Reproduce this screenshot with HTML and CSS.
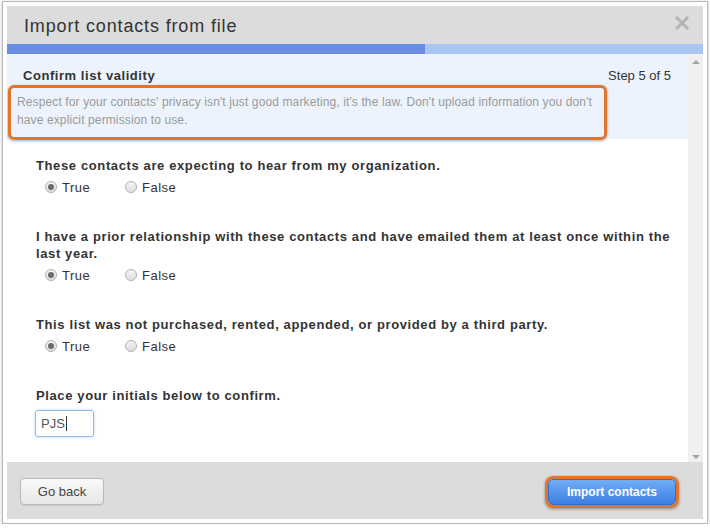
FILE: index.html
```html
<!DOCTYPE html>
<html>
<head>
<meta charset="utf-8">
<link rel="stylesheet" href="styles.css">
</head>
<body>
<div class="frame">
  <div class="dialog">
    <div class="header">
      <h1 class="title">Import contacts from file</h1>
      <svg class="close" width="14" height="14" viewBox="0 0 14 14"><path d="M2 2 L12 12 M12 2 L2 12" stroke="#b3b3b3" stroke-width="3" stroke-linecap="square"/></svg>
    </div>
    <div class="progress"><div class="progress-fill" style="width:418px"></div></div>
    <div class="body">
      <div class="main">
        <div class="intro">
          <div class="intro-head">
            <span class="intro-title">Confirm list validity</span>
            <span class="step">Step 5 of 5</span>
          </div>
          <p class="notice">Respect for your contacts' privacy isn't just good marketing, it's the law. Don't upload information you don't have explicit permission to use.</p>
        </div>
        <div class="questions">
          <div class="question">
            <div class="q-label">These contacts are expecting to hear from my organization.</div>
            <div class="options">
              <span class="option"><span class="radio checked"></span>True</span>
              <span class="option"><span class="radio"></span>False</span>
            </div>
          </div>
          <div class="question">
            <div class="q-label">I have a prior relationship with these contacts and have emailed them at least once within the last year.</div>
            <div class="options">
              <span class="option"><span class="radio checked"></span>True</span>
              <span class="option"><span class="radio"></span>False</span>
            </div>
          </div>
          <div class="question">
            <div class="q-label">This list was not purchased, rented, appended, or provided by a third party.</div>
            <div class="options">
              <span class="option"><span class="radio checked"></span>True</span>
              <span class="option"><span class="radio"></span>False</span>
            </div>
          </div>
          <div class="question">
            <div class="q-label">Place your initials below to confirm.</div>
            <div class="initials">PJS<span class="caret"></span></div>
          </div>
        </div>
      </div>
      <div class="scrollbar">
        <span class="arrow up"></span>
        <span class="arrow down"></span>
      </div>
    </div>
    <div class="footer">
      <button class="btn back">Go back</button>
      <span class="highlight"><button class="btn primary">Import contacts</button></span>
    </div>
  </div>
</div>
</body>
</html>
```
FILE: styles.css
```css
* { box-sizing: border-box; }
html, body { margin: 0; padding: 0; background: #fff; }
body { font-family: "Liberation Sans", Arial, sans-serif; color: #333; }

.frame {
  margin: 1px 0 0 2px;
  width: 706px;
  border: 1px solid #b8b8b8;
  padding: 4px;
  background: #fff;
  box-shadow: 0 1px 3px rgba(0,0,0,0.25);
}
.dialog { width: 696px; display: flex; flex-direction: column; }

.header {
  height: 38px;
  background: #dcdcdc;
  display: flex;
  align-items: center;
  justify-content: space-between;
  padding: 0 14px 0 17px;
}
.title {
  margin: 0;
  font-size: 18px;
  letter-spacing: 0.85px;
  font-weight: normal;
  color: #333;
  line-height: 20px;
  padding-top: 1px;
}
.close { margin-top: -5px; }

.progress { height: 10px; background: #a9c6f1; }
.progress-fill { height: 10px; background: #688de2; }

.body { display: flex; height: 408px; }
.main { flex: 1; background: #fff; }
.scrollbar {
  width: 15px;
  background: #f0f0f0;
  display: flex;
  flex-direction: column;
  justify-content: space-between;
  align-items: center;
  padding: 6px 0 3px;
}
.arrow { width: 0; height: 0; border-left: 4px solid transparent; border-right: 4px solid transparent; }
.arrow.up { border-bottom: 4px solid #a3a3a3; }
.arrow.down { border-top: 4px solid #a3a3a3; }

.intro {
  background: #edf3fc;
  height: 85px;
  padding: 14px 17px 0 16px;
}
.intro-head {
  display: flex;
  justify-content: space-between;
  font-size: 13px;
  line-height: 16px;
}
.intro-title { font-weight: bold; color: #333; letter-spacing: 0.55px; }
.step { color: #333; }
.notice {
  margin: 1px 0 0 -15px;
  width: 599px;
  border: 3px solid #e0752b;
  border-radius: 6px;
  box-shadow: 0 1px 3px rgba(0,0,0,0.35);
  padding: 5px 8px 8px 6px;
  font-size: 12px;
  letter-spacing: 0.12px;
  line-height: 18px;
  color: #9a9a9a;
}

.questions { padding: 18px 10px 0 29px; }
.question { margin-bottom: 30px; }
.q-label {
  font-size: 13px;
  font-weight: bold;
  letter-spacing: 0.62px;
  line-height: 17px;
  color: #333;
}
.options {
  display: flex;
  margin-top: 2px;
  padding-left: 9px;
  height: 22px;
  align-items: center;
  font-size: 13px;
  letter-spacing: 0.5px;
  color: #333;
}
.option { display: inline-flex; align-items: center; width: 80px; }
.radio {
  width: 12px;
  height: 12px;
  border-radius: 50%;
  border: 1px solid #b0b0b0;
  background: linear-gradient(#f4f4f4, #dedede);
  margin-right: 5px;
  position: relative;
}
.radio.checked::after {
  content: "";
  position: absolute;
  left: 2px; top: 2px;
  width: 6px; height: 6px;
  border-radius: 50%;
  background: #6b6b6b;
}
.initials {
  margin-top: 6px;
  margin-left: -1px;
  width: 59px;
  height: 27px;
  border: 1px solid #8fbbe9;
  border-radius: 3px;
  box-shadow: 0 0 3px rgba(100,160,230,0.45);
  padding: 0 5px;
  font-size: 13px;
  line-height: 25px;
  color: #555;
  display: flex;
  align-items: center;
}
.caret { display: inline-block; width: 1px; height: 15px; background: #333; margin-left: 1px; }

.footer {
  height: 57px;
  background: #dcdcdc;
  display: flex;
  justify-content: space-between;
  align-items: flex-start;
  padding: 16px 24px 0 13px;
}
.btn {
  font-family: "Liberation Sans", Arial, sans-serif;
  font-size: 13px;
  cursor: pointer;
}
.back {
  width: 84px;
  height: 27px;
  border: 1px solid #b9b9b9;
  border-radius: 4px;
  background: linear-gradient(#fafafa, #e6e6e6);
  color: #444;
  box-shadow: 0 1px 1px rgba(0,0,0,0.08);
}
.highlight {
  display: inline-flex;
  margin-top: -2px;
  border: 3px solid #e0752b;
  border-radius: 8px;
  box-shadow: 0 1px 3px rgba(0,0,0,0.4);
}
.primary {
  width: 128px;
  height: 26px;
  border: 1px solid #2f6cd0;
  border-radius: 5px;
  background: linear-gradient(#70aef6, #3d7de5);
  color: #fff;
  font-size: 12px;
  font-weight: bold;
  padding: 0;
}
```
